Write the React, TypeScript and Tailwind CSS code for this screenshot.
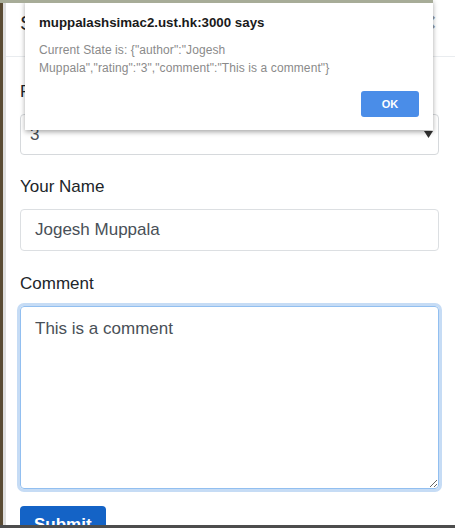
import React from 'react';

function AlertDialog() {
  return (
    <div className="absolute left-[25px] top-0 w-[408px] h-[130px] bg-white shadow-[0_2px_5px_rgba(0,0,0,0.35)] px-[14px] pt-[14px] z-10">
      <div className="text-[13.3px] leading-[18px] font-bold text-[#1a1a1a]">muppalashsimac2.ust.hk:3000 says</div>
      <div className="mt-[9px] text-[12px] leading-[18px] text-[#8a8a8a] tracking-[0.1px]">
        Current State is: {'{"author":"Jogesh'}
        <br />
        {'Muppala","rating":"3","comment":"This is a comment"}'}
      </div>
      <div className="flex justify-end mt-[14px]">
        <div className="w-[58px] h-[26px] rounded-[3px] bg-[#4a8de8] flex items-center justify-center text-white text-[11px] font-bold">
          OK
        </div>
      </div>
    </div>
  );
}

export default function App() {
  return (
    <div
      className="relative w-[455px] h-[528px] overflow-hidden bg-white flex flex-col"
      style={{ fontFamily: '"Liberation Sans", Arial, sans-serif' }}
    >
      <div className="absolute left-0 top-0 w-[433px] h-[3px] bg-[#a7ac98] z-20" />
      <AlertDialog />
      <div className="flex-1 flex min-h-0 overflow-hidden">
        <div className="w-[3px] bg-[#5a4b33]" />
        <div className="flex-1 flex flex-col border-l-[3px] border-[#dedede]">
          <div className="h-[57px] shrink-0 flex justify-between items-start border-b border-[#e9ecef] pl-[14px] pr-[19px] pt-[8px]">
            <div className="text-[21px] leading-[30px] font-medium text-[#212529]">Submit Comment</div>
            <div className="text-[25px] leading-[25px] font-bold text-[#000] opacity-40 mt-[2px]">×</div>
          </div>
          <div className="pl-[14px] pr-[16px] pt-[22px] flex flex-col">
            <label className="text-[17px] leading-[25px] text-[#212529] mb-[10px]">Rating</label>
            <div className="h-[41px] border border-[#d6d9dc] rounded-[4px] flex items-center justify-between pl-[9px] pr-[5px] text-[17px] text-[#495057]">
              <span>3</span>
              <svg width="9" height="7" viewBox="0 0 9 7">
                <path d="M0 0 L9 0 L4.5 7 Z" fill="#333" />
              </svg>
            </div>
            <label className="mt-[19px] text-[17px] leading-[25px] text-[#212529] mb-[10px]">Your Name</label>
            <div className="h-[42px] border border-[#dcdfe2] rounded-[4px] flex items-center pl-[14px] text-[17px] text-[#495057]">
              Jogesh Muppala
            </div>
            <label className="mt-[20px] text-[17px] leading-[25px] text-[#212529] mb-[10px]">Comment</label>
            <textarea
              readOnly
              value="This is a comment"
              className="h-[183px] border border-[#92bff0] ring-[3px] ring-[#c6dcf5] rounded-[4px] pl-[14px] pt-[9px] text-[17px] leading-[25px] text-[#495057] outline-none"
              style={{ fontFamily: '"Liberation Sans", Arial, sans-serif' }}
            />
            <div className="mt-[17px] self-start h-[40px] px-[14px] rounded-[4px] bg-[#1463c6] text-white text-[17px] leading-[25px] pt-[6px] font-bold">
              Submit
            </div>
          </div>
        </div>
      </div>
      <div className="h-[3px] shrink-0 bg-[#4d4d4d]" />
    </div>
  );
}
